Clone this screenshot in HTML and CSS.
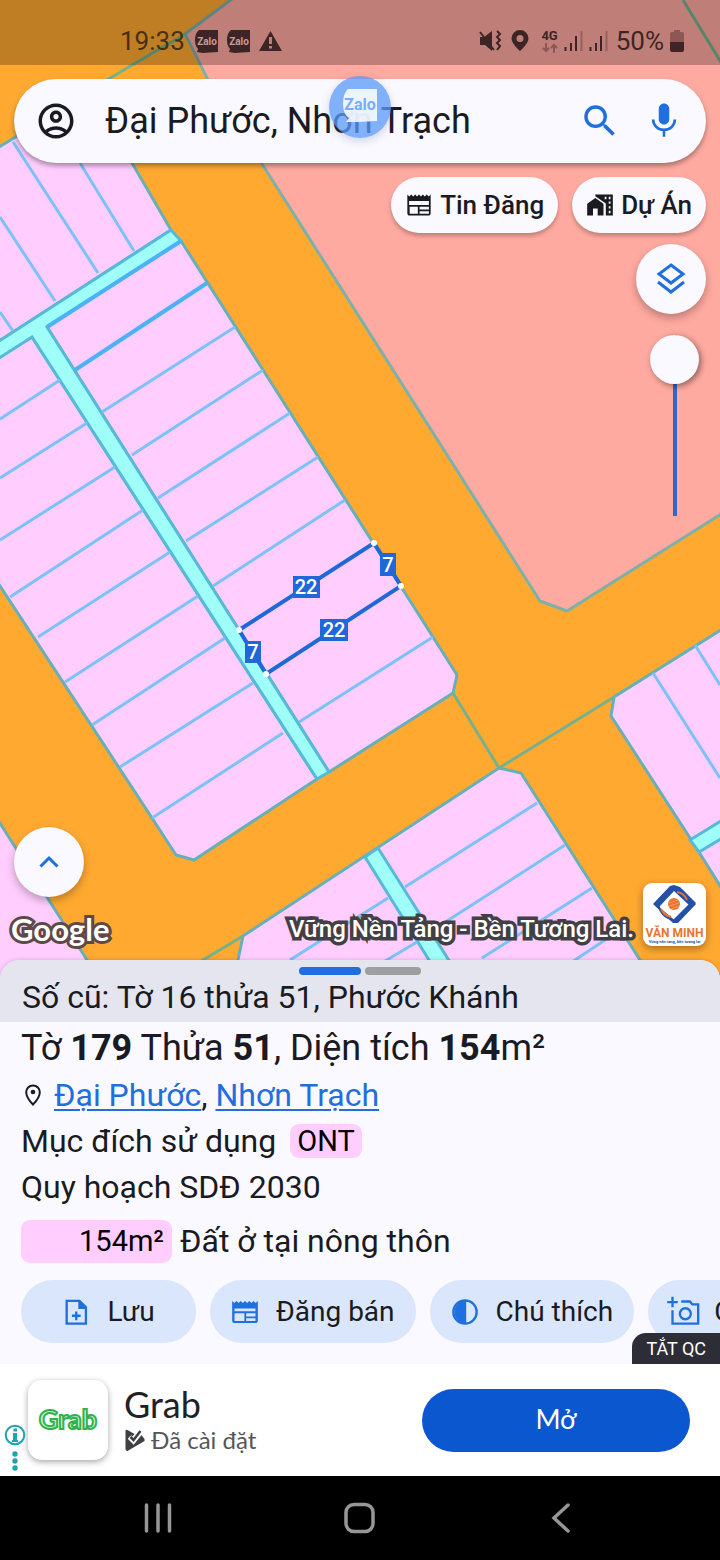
FILE: index.html
```html
<!DOCTYPE html>
<html lang="vi">
<head>
<meta charset="utf-8">
<meta name="viewport" content="width=device-width, initial-scale=1">
<title>Bản đồ quy hoạch</title>
<link rel="stylesheet" href="styles.css">
</head>
<body>
<div class="screen">
  <section class="map">
    <svg class="map-canvas" viewBox="0 0 720 1000" preserveAspectRatio="xMinYMin slice" aria-label="Bản đồ thửa đất">
      <rect class="road" width="720" height="1000"/>
      <path class="zone-salmon" d="M236 -4L185 34L207 78L262 164L540 601L567 611L726 511V-4Z"/>
      <path class="edge" d="M185 34L100 84M683 0L722 64"/>
      <path class="plot" d="M-4 149L110 79L132 163L171 230L-4 343Z"/>
      <path class="plot" d="M47 327L181 241L433 637L457 675L453 693L329 772Z"/>
      <path class="plot" d="M-4 359L32 337L317 779L194 860L176 855L152 818L-4 580Z"/>
      <path class="plot" d="M-4 817L87 960L112 1004H-4Z"/>
      <path class="plot" d="M499 768L521 773L640 960L665 1004H234L238 960L243 936Z"/>
      <path class="plot" d="M724 628L614 697L611 716L692 841L724 892Z"/>
      <path class="edge" d="M453 693L499 768L614 697M243 936L203 960L180 975"/>
      <path class="alley" d="M171 230L181 241L47 327L329 772L317 779L32 337L-4 360V343Z"/>
      <path class="alley" d="M365 857L378 848L450 962L474 1004H454L429 960Z"/>
      <path class="alley" d="M690 840L724 819V837L699 852Z"/>
      <path class="lot" d="M0 312L13 331M0 217L55 301M13 142L98 273M80 163L134 251"/>
      <path class="lot lot-strong" d="M75 370L207 283M181 241L47 327"/>
      <path class="lot" d="M102 412L235 327M132 455L263 370M158 498L290 413M186 541L318 457M213 586L345 500M299 722L433 637"/>
      <path class="lot" d="M60 380L0 419M87 423L0 478M115 467L0 540M143 510L10 597M170 552L38 637M198 596L65 682M225 638L92 725M253 683L120 767M283 733L152 818"/>
      <path class="lot" d="M537 803L405 887M565 845L433 930M592 888L482 958M620 930L560 970M388 898L290 960M417 942L370 970M653 673L720 778M695 645L720 685"/>
      <path class="parcel" d="M239 630L374 543L401 586L266 674Z"/>
      <g class="parcel-dots"><circle cx="239" cy="630" r="3"/><circle cx="374" cy="543" r="3"/><circle cx="401" cy="586" r="3"/><circle cx="266" cy="674" r="3"/></g>
      <g class="measure">
        <rect x="293" y="576" width="27" height="22"/><text x="306" y="594">22</text>
        <rect x="320" y="619" width="28" height="22"/><text x="334" y="637">22</text>
        <rect x="380" y="553" width="16" height="23"/><text x="388" y="572">7</text>
        <rect x="245" y="641" width="16" height="22"/><text x="253" y="659">7</text>
      </g>
    </svg>

    <header class="status">
      <div class="status-group">
        <time>19:33</time>
        <svg class="zalo-mini" viewBox="0 0 23 23"><path d="M4 0H23V22L8 23L2 22L3 19Q0 16 0 10Q0 3 4 0Z"/><text x="12" y="15">Zalo</text></svg>
        <svg class="zalo-mini" viewBox="0 0 23 23"><path d="M4 0H23V22L8 23L2 22L3 19Q0 16 0 10Q0 3 4 0Z"/><text x="12" y="15">Zalo</text></svg>
        <svg class="warn" viewBox="0 0 23 23"><path fill-rule="evenodd" d="M11.500 1L23 21H0ZM10 7V14H13V7ZM10 16V18.500H13V16Z"/></svg>
      </div>
      <div class="status-group status-right">
        <svg class="mute" viewBox="0 0 23 23"><path d="M1 7H5L13 1V21L6 15H1Z"/><path class="ink-line" d="M1 2L15 20M18 1L21 4L18 7L21 10L18 13L21 16L18 20"/></svg>
        <svg class="pin" viewBox="0 0 18 22"><path fill-rule="evenodd" d="M9 0A8.500 8.500 0 0 0 .500 8.500C.500 14 9 21 9 21S17.500 14 17.500 8.500A8.500 8.500 0 0 0 9 0ZM9 5A3.500 3.500 0 1 1 9 12A3.500 3.500 0 1 1 9 5Z"/></svg>
        <span class="net"><b>4G</b><svg viewBox="0 0 16 10"><path d="M4 0V8M1 5L4 8L7 5M12 10V2M9 5L12 2L15 5"/></svg></span>
        <svg class="bars" viewBox="0 0 19 22"><path d="M1.500 17V21M7 13V21M12 6V21"/><path class="faint" d="M17.500 1V21"/></svg>
        <svg class="bars" viewBox="0 0 19 22"><path d="M1.500 17V21M7 13V21M12 6V21"/><path class="faint" d="M17.500 1V21"/></svg>
        <span class="percent">50%</span>
        <svg class="battery" viewBox="0 0 14 22"><path class="faint-fill" d="M4 0H10V2H12Q14 2 14 4V12H0V4Q0 2 2 2H4Z"/><path d="M0 12H14V20Q14 22 12 22H2Q0 22 0 20Z"/></svg>
      </div>
    </header>

    <div class="tools">
      <form class="search" role="search">
        <button class="icon-btn" type="button" aria-label="Tài khoản"><svg viewBox="0 0 24 24"><path d="M12 2C6.480 2 2 6.480 2 12s4.480 10 10 10 10-4.480 10-10S17.520 2 12 2zM7.350 18.500C8.660 17.560 10.260 17 12 17s3.340.560 4.650 1.500c-1.310.940-2.910 1.500-4.650 1.500s-3.340-.560-4.650-1.500zm10.790-1.380C16.450 15.800 14.320 15 12 15s-4.450.800-6.140 2.120C4.700 15.730 4 13.950 4 12c0-4.420 3.580-8 8-8s8 3.580 8 8c0 1.950-.700 3.730-1.860 5.120z"/><path d="M12 6c-1.930 0-3.500 1.570-3.500 3.500S10.070 13 12 13s3.500-1.570 3.500-3.500S13.930 6 12 6zm0 5c-.830 0-1.500-.670-1.500-1.500S11.170 8 12 8s1.500.670 1.500 1.500S12.830 11 12 11z"/></svg></button>
        <input class="search-input" type="text" value="Đại Phước, Nhơn Trạch" aria-label="Tìm địa điểm">
        <button class="icon-btn blue" type="submit" aria-label="Tìm kiếm"><svg viewBox="0 0 24 24"><path d="M15.500 14h-.790l-.280-.270A6.470 6.470 0 0 0 16 9.500 6.500 6.500 0 1 0 9.500 16c1.610 0 3.090-.590 4.230-1.570l.270.280v.790l5 4.990L20.490 19l-4.990-5zm-6 0C7.010 14 5 11.990 5 9.500S7.010 5 9.500 5 14 7.010 14 9.500 11.990 14 9.500 14z"/></svg></button>
        <button class="icon-btn blue" type="button" aria-label="Tìm bằng giọng nói"><svg viewBox="0 0 24 24"><path d="M12 14c1.660 0 3-1.340 3-3V5c0-1.660-1.340-3-3-3S9 3.340 9 5v6c0 1.660 1.340 3 3 3z"/><path d="M18.200 11.200c0 3.400-2.800 5.800-6.200 5.800s-6.200-2.400-6.200-5.800M12 17V21" fill="none" stroke="currentColor" stroke-width="1.500"/></svg></button>
      </form>
      <button class="bubble" type="button" aria-label="Bong bóng Zalo"><svg viewBox="0 0 36 36"><path d="M6 1H35V33L16 34L4 34L7 30Q1 26 1 16Q1 5 6 1Z"/><text x="18" y="22">Zalo</text></svg></button>

      <nav class="chips">
        <button class="chip" type="button"><svg viewBox="0 0 24 24"><path d="m22 3-1.670 1.670L18.670 3 17 4.670 15.330 3l-1.660 1.670L12 3l-1.670 1.670L8.670 3 7 4.670 5.330 3 3.670 4.670 2 3v16c0 1.100.900 2 2 2h16c1.100 0 2-.900 2-2V3zM11 19.500H4v-6h7v6zm9.500 0h-8v-2.200h8v2.200zm0-3.700h-8v-2.300h8v2.300zm0-3.800H3.500V8.500h17V12z"/></svg>Tin Đăng</button>
        <button class="chip" type="button"><svg viewBox="0 0 24 24"><path d="M1 11v10h5v-6h4v6h5V11L8 6z"/><path d="M8 3v1.400l9 6.300V21h6V3H8zm8 4V5h1.500v2zm3.500 0V5H21v2zm0 4V9H21v2zm0 4v-2H21v2zm0 4v-2H21v2z"/></svg>Dự Án</button>
      </nav>
      <button class="round" type="button" aria-label="Lớp bản đồ"><svg class="layers" viewBox="0 0 36 36"><path d="M18 4L30 13L18 22L6 13ZM5 21L18 31L31 21"/></svg></button>
      <input class="opacity" type="range" min="0" max="100" value="0" aria-label="Độ mờ lớp bản đồ">
    </div>

    <div class="map-foot">
      <div class="foot-left">
        <button class="round" type="button" aria-label="Mở rộng"><svg class="up" viewBox="0 0 24 24"><path d="M3.500 16.500L12 8L20.500 16.500"/></svg></button>
        <span class="google">Google</span>
      </div>
      <span class="slogan">Vững Nền Tảng - Bền Tương Lai.</span>
      <a class="brand" href="#" aria-label="Văn Minh"><svg viewBox="0 0 63 63">
        <path fill="#2450a5" d="M31 2L37 4L53 20L48 24L31 8L16 24L35 40L30 40L10 21L27 3ZM46 17L53 21L35 40L29 38L46 21Z"/>
        <path fill="none" stroke="#2450a5" stroke-width="1.500" d="M34 6Q44 9 47 20M16 23Q17 33 29 37"/>
        <path fill="none" stroke="#e87532" stroke-width="2" d="M34 9Q41 10 44 17M18 26Q21 32 28 34"/>
        <circle fill="#e87532" cx="31" cy="21" r="6"/>
        <path fill="none" stroke="#f6b48b" stroke-width=".6" d="M26 20L35 17M26 23L36 20M28 26L36 23"/>
        <text class="brand-name" x="31.500" y="54">VĂN MINH</text><text class="brand-line" x="31.500" y="60">Vững nền tảng, bền tương lai</text>
      </svg></a>
    </div>
  </section>

  <main class="sheet">
    <div class="sheet-head">
      <div class="handles"><i class="handle on"></i><i class="handle"></i></div>
      <p class="old">Số cũ: Tờ 16 thửa 51, Phước Khánh</p>
    </div>
    <div class="info">
      <h1 class="title">Tờ <b>179</b> Thửa <b>51</b>, Diện tích <b>154</b>m²</h1>
      <p class="row place"><svg viewBox="0 0 24 24"><path d="M12 2.500C8 2.500 5.200 5.400 5.200 9.200C5.200 14.500 12 21.500 12 21.500S18.800 14.500 18.800 9.200C18.800 5.400 16 2.500 12 2.500Z"/><circle cx="12" cy="9" r="2.300"/></svg><span><a href="#">Đại Phước</a>, <a href="#">Nhơn Trạch</a></span></p>
      <p class="row use">Mục đích sử dụng <span class="tag">ONT</span></p>
      <p class="row">Quy hoạch SDĐ 2030</p>
      <p class="row plan"><span class="area">154m²</span>Đất ở tại nông thôn</p>
    </div>
    <div class="actions">
      <button class="action" type="button"><svg viewBox="0 0 24 24"><path class="line" d="M4 2.500H15L20.500 8V22H4Z"/><path d="M14 2L21 9.500H14Z"/><path class="line" d="M12.200 11.500V19M8.500 15.200H16"/></svg>Lưu</button>
      <button class="action" type="button"><svg viewBox="0 0 24 24"><path d="m23 2.500-1.800 1.800L19.330 2.500 17.500 4.300 15.700 2.500l-1.850 1.800L12 2.500l-1.850 1.800L8.300 2.500 6.500 4.300 4.670 2.500 2.800 4.300 1 2.500v17c0 1.100.900 2 2 2h18c1.100 0 2-.900 2-2V2.500zM11.500 19.800H3v-6.800h8.500v6.800zm9.500 0h-8v-2.500h8v2.500zm0-4h-8v-2.800h8v2.800zm0-4.500H3V9h18v2.300z"/></svg>Đăng bán</button>
      <button class="action" type="button"><svg viewBox="0 0 24 24"><circle class="line" cx="12" cy="12" r="10"/><path d="M13 2A10 10 0 0 0 13 22Z"/></svg>Chú thích</button>
      <button class="action" type="button"><svg viewBox="0 0 24 24"><path class="line" d="M3 -1V8M-1.500 3.500H7.500M3 10.500V22H25V5.500H20L18 3H10.500"/><circle class="line" cx="14" cy="13.500" r="4.700"/></svg>Chụp ảnh</button>
    </div>
  </main>

  <aside class="ad">
    <button class="ad-off" type="button">TẮT QC</button>
    <div class="ad-marks"><svg viewBox="0 0 22 52"><circle class="ring" cx="11" cy="11" r="9.300"/><path d="M9 9H13V16H14V18H8V16H9ZM9.500 4.500H13V7.500H9.500Z"/><circle cx="11" cy="30" r="2.700"/><circle cx="11" cy="37" r="2.700"/><circle cx="11" cy="44" r="2.700"/></svg></div>
    <svg class="ad-icon" viewBox="0 0 80 80"><text x="40" y="49">Grab</text></svg>
    <div class="ad-text">
      <h2>Grab</h2>
      <p><svg viewBox="0 0 20 22"><path fill-rule="evenodd" d="M1 2Q1 0 3 1L10 5L6 10L9 14L17 6L20 10V12L3 22Q1 22 1 20Z"/><path d="M5 8L9 12L17 2" fill="none" stroke="#fff" stroke-width="5"/><path d="M6 8L9 11L16 2" fill="none" stroke="currentColor" stroke-width="2.500"/></svg>Đã cài đặt</p>
    </div>
    <a class="open" href="#">Mở</a>
  </aside>

  <nav class="system">
    <button type="button" aria-label="Gần đây"><svg viewBox="0 0 36 36"><path d="M6.500 5V31M18 5V31M29.500 5V31"/></svg></button>
    <button type="button" aria-label="Trang chủ"><svg viewBox="0 0 36 36"><rect x="4" y="4.500" width="27" height="27" rx="8"/></svg></button>
    <button type="button" aria-label="Quay lại"><svg viewBox="0 0 36 36"><path d="M24 5L10 18L24 31"/></svg></button>
  </nav>
</div>
</body>
</html>
```
FILE: styles.css
```css
* { box-sizing: border-box; }
body, h1, h2, p { margin: 0; }
body { font-family: Roboto, "Noto Sans", sans-serif; color: #1a1b22; background: #faf9ff; }
button, input { font: inherit; color: inherit; border: 0; padding: 0; background: none; }
a { color: #1f6fde; }
svg { display: block; flex: none; fill: currentColor; }

.screen { display: flex; flex-direction: column; min-height: 100vh; overflow: hidden; }

/* Map */
.map { position: relative; flex: 1; display: flex; flex-direction: column; min-height: 800px; padding-bottom: 14px; }
.map-canvas { position: absolute; top: 0; left: 0; width: 100%; height: calc(100% + 40px); }
.road { fill: #ffa931; }
.zone-salmon { fill: #ffaaa0; stroke: #7db0a8; stroke-width: 3; }
.plot { fill: #ffceff; stroke: #68afb8; stroke-width: 3; }
.alley { fill: #9ffff8; stroke: #56b9d8; stroke-width: 3; }
.edge { fill: none; stroke: #76b08c; stroke-width: 3; }
.lot { fill: none; stroke: #7cc1f9; stroke-width: 3; }
.lot-strong { stroke: #4bb2f6; stroke-width: 4; }
.parcel { fill: none; stroke: #2068d8; stroke-width: 4; }
.parcel-dots { fill: #fff; }
.measure rect { fill: #2068d8; }
.measure text { fill: #fff; font-size: 20px; font-weight: 500; text-anchor: middle; }

/* Status bar */
.status { position: relative; display: flex; justify-content: space-between; height: 65px; padding: 19px 36px 0 120px; background: rgba(0, 0, 0, .25); color: #3d2526; font-size: 26px; line-height: 46px; }
.status-group { display: flex; align-items: center; gap: 9px; height: 44px; }
.status-group time { color: #46300f; margin-right: 1px; }
.zalo-mini, .warn { width: 23px; height: 23px; }
.zalo-mini text { fill: #c79b96; font-size: 10px; font-weight: 700; text-anchor: middle; }
.mute { width: 23px; height: 23px; }
.ink-line { fill: none; stroke: currentColor; stroke-width: 2; }
.pin { width: 18px; height: 22px; margin-left: 3px; }
.net { display: flex; flex-direction: column; align-items: center; gap: 1px; margin-left: 6px; font-size: 13px; line-height: 12px; }
.net svg { width: 16px; height: 10px; fill: none; stroke: #8c5755; stroke-width: 2; }
.bars { width: 19px; height: 22px; fill: none; stroke: currentColor; stroke-width: 2; }
.faint { stroke: #97605d; }
.faint-fill { fill: #8c5755; }
.status-right { gap: 6px; }
.percent { margin-left: 2px; }
.battery { width: 14px; height: 22px; }

/* Map tools */
.tools { position: relative; display: flex; flex-direction: column; align-items: flex-end; padding: 14px 14px 0; }
.search { display: flex; align-items: center; gap: 22px; width: 100%; height: 84px; padding: 0 21px; border-radius: 42px; background: #faf9ff; box-shadow: 0 3px 5px rgba(0, 0, 0, .35); }
.search-input { flex: 1; min-width: 0; height: 60px; margin-left: 6px; font-size: 36px; outline: 0; }
.icon-btn svg { width: 42px; height: 42px; }
.blue { color: #1f6fde; }
.bubble { position: absolute; top: 11px; left: 50%; width: 62px; height: 62px; margin-left: -31px; border-radius: 50%; background: rgba(91, 154, 250, .76); box-shadow: 0 3px 8px rgba(60, 80, 130, .22); }
.bubble svg { width: 36px; height: 36px; margin: -3px auto 0; }
.bubble path { fill: #fff; fill-opacity: .84; }
.bubble text { fill: #7aaef7; font-size: 16px; font-weight: 700; text-anchor: middle; }
.chips { display: flex; gap: 14px; margin-top: 14px; }
.chip { display: flex; align-items: center; gap: 7px; height: 56px; padding: 0 14px; border-radius: 28px; background: #faf9ff; box-shadow: 0 3px 4px rgba(0, 0, 0, .25); font-size: 26px; font-weight: 500; white-space: nowrap; }
.chip svg { width: 28px; height: 28px; }
.round { display: grid; place-items: center; width: 70px; height: 70px; border-radius: 50%; background: #faf9ff; color: #1f6fde; box-shadow: 0 4px 8px rgba(0, 0, 0, .28); }
.round svg { fill: none; stroke: currentColor; }
.tools .round { margin-top: 11px; }
.layers { width: 36px; height: 36px; stroke-width: 3; }
.up { width: 24px; height: 24px; stroke-width: 3; }
.opacity { appearance: none; writing-mode: vertical-lr; width: 49px; height: 181px; margin: 21px 7px 0; }
.opacity::-webkit-slider-runnable-track { width: 49px; height: 100%; border-radius: 2px; background: linear-gradient(#2f68c8, #2f68c8) center / 4px 100% no-repeat; }
.opacity::-webkit-slider-thumb { appearance: none; width: 49px; height: 49px; border-radius: 50%; background: #faf9ff; box-shadow: 2px 2px 6px rgba(0, 0, 0, .45); }

/* Map footer */
.map-foot { position: relative; display: flex; align-items: flex-end; margin-top: auto; padding: 0 14px 0 11px; }
.foot-left { display: flex; flex-direction: column; gap: 15px; margin-right: auto; }
.foot-left .round { margin-left: 3px; }
.google, .slogan { color: #fff; line-height: 34px; white-space: nowrap; paint-order: stroke fill; }
.google { font-family: Lato, sans-serif; font-size: 31px; font-weight: 700; -webkit-text-stroke: 6px #5d4a48; }
.slogan { font-size: 24px; font-weight: 500; -webkit-text-stroke: 7px #424045; }
.brand { width: 63px; height: 63px; margin-left: 9px; border-radius: 9px; background: #fff; box-shadow: 0 3px 8px rgba(0, 0, 0, .35); }
.brand-name { fill: #e87532; font-size: 12px; font-weight: 700; text-anchor: middle; }
.brand-line { fill: #2450a5; font-size: 4px; font-weight: 700; text-anchor: middle; }

/* Parcel sheet */
.sheet { position: relative; border-radius: 20px 20px 0 0; background: #faf9ff; box-shadow: 0 0 4px rgba(0, 0, 0, .2); overflow: hidden; }
.sheet-head { padding: 7px 22px 5px; background: #e5e5ef; }
.handles { display: flex; justify-content: center; gap: 4px; margin-bottom: 2px; }
.handle { width: 56px; height: 8px; border-radius: 4px; background: #9e9e9e; }
.handle.on { width: 62px; background: #1f6fde; }
.old { font-size: 32px; line-height: 40px; }
.info { padding: 3px 22px 0 21px; }
.title { font-size: 36px; font-weight: 400; line-height: 47px; }
.row { display: flex; align-items: center; font-size: 32px; line-height: 46px; }
.place svg { width: 24px; height: 24px; margin-right: 9px; fill: none; stroke: currentColor; stroke-width: 2; }
.place circle { fill: currentColor; stroke: none; }
.place a { text-decoration-thickness: 2px; text-underline-offset: 3px; }
.tag, .area { color: #000; background: #ffceff; font-size: 29px; }
.tag { margin-left: 14px; padding: 0 7px; border-radius: 9px; line-height: 34px; }
.plan { gap: 8px; padding-top: 8px; }
.area { width: 151px; padding-right: 8px; border-radius: 9px; line-height: 43px; text-align: right; }
.actions { display: flex; gap: 14px; padding: 16px 0 21px 21px; overflow: hidden; }
.action { display: flex; flex: none; align-items: center; justify-content: center; gap: 17px; min-width: 175px; height: 63px; padding: 0 21px; border-radius: 32px; background: #d9e6fb; font-size: 28px; white-space: nowrap; }
.action svg { width: 28px; height: 28px; color: #1f6fde; overflow: visible; }
.action .line { fill: none; stroke: currentColor; stroke-width: 2; }

/* Advertisement */
.ad { position: relative; display: flex; align-items: center; height: 112px; padding: 0 30px 0 28px; background: #fff; font-family: Lato, Roboto, sans-serif; }
.ad-off { position: absolute; right: 0; bottom: 100%; height: 31px; padding: 0 14px; border-radius: 14px 0 0 0; background: #2c2d37; color: #fff; font-family: Roboto, sans-serif; font-size: 18px; }
.ad-marks { position: absolute; left: 0; bottom: 0; width: 28px; padding-left: 4px; color: #1fa3b4; }
.ad-marks svg { width: 22px; height: 52px; }
.ring { fill: none; stroke: currentColor; stroke-width: 2; }
.ad-icon { width: 80px; height: 80px; border-radius: 14px; background: #fff; box-shadow: 0 2px 6px rgba(0, 0, 0, .35); }
.ad-icon text { fill: #d9f5dd; stroke: #2fb24c; stroke-width: 2; font-size: 27px; font-weight: 700; text-anchor: middle; }
.ad-text { flex: 1; margin-left: 16px; }
.ad-text h2 { color: #202124; font-size: 36px; font-weight: 400; line-height: 40px; }
.ad-text p { display: flex; align-items: center; gap: 6px; color: #55565a; font-size: 24px; line-height: 32px; }
.ad-text svg { width: 21px; height: 22px; color: #3f4043; }
.open { width: 268px; padding-bottom: 3px; border-radius: 32px; background: #0b57d0; color: #fff; font-size: 27px; line-height: 60px; text-align: center; text-decoration: none; }

/* System navigation */
.system { display: grid; grid-template-columns: repeat(3, 1fr); place-items: center; height: 84px; padding: 0 57px; background: #000; color: #969696; }
.system svg { width: 36px; height: 36px; fill: none; stroke: currentColor; stroke-width: 3.500; stroke-linecap: round; }
```
